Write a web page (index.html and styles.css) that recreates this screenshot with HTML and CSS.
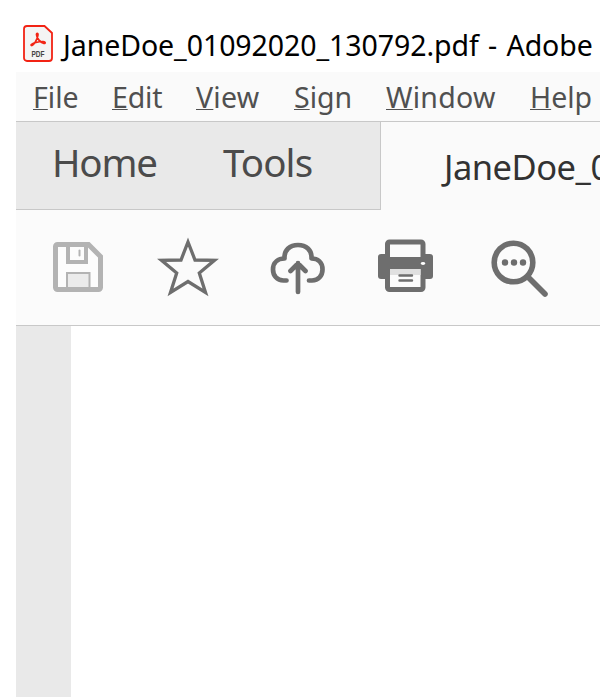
FILE: index.html
```html
<!DOCTYPE html>
<html lang="en">
<head>
<meta charset="utf-8">
<title>JaneDoe_01092020_130792.pdf - Adobe</title>
<link rel="stylesheet" href="styles.css">
</head>
<body>
<div class="window">
  <header class="titlebar">
    <svg class="pdf-icon" viewBox="0 0 30 37">
      <path class="pdf-page" d="M4 1H21.5L29 8V33a3 3 0 0 1-3 3H4a3 3 0 0 1-3-3V4a3 3 0 0 1 3-3Z"/>
      <path class="pdf-mark" d="M8.500 20.500C10.500 21 14.600 14 15 9.800C15.100 7.700 13.400 7.700 13.500 9.800C13.700 13 17.500 17.900 20.800 18.400C22.900 18.700 22.600 16.600 20.200 16.500C16 16.400 9 18.200 8.200 19.700Q7.900 20.300 8.500 20.500"/>
      <text class="pdf-label" x="15" y="32" textLength="13" lengthAdjust="spacingAndGlyphs">PDF</text>
    </svg>
    <span class="title">JaneDoe_01092020_130792.pdf - Adobe</span>
  </header>
  <nav class="menubar">
    <span class="file"><u>F</u>ile</span>
    <span class="edit"><u>E</u>dit</span>
    <span class="view"><u>V</u>iew</span>
    <span class="sign"><u>S</u>ign</span>
    <span class="win"><u>W</u>indow</span>
    <span class="help"><u>H</u>elp</span>
  </nav>
  <div class="tabs">
    <div class="fixed-tabs"><span class="home">Home</span><span class="tools">Tools</span></div>
    <div class="doc-tab"><span class="doc">JaneDoe_0</span></div>
  </div>
  <div class="toolbar">
    <svg class="save" viewBox="0 0 50 50"><path class="save-frame" d="M4.500 2.500H35.500L47.500 14.500V45.500a2 2 0 0 1-2 2H4.500a2 2 0 0 1-2-2V4.500a2 2 0 0 1 2-2Z"/><path class="save-top" d="M15 2V20H33V2"/><path class="save-slot" d="M26.500 8.500v5"/><path class="save-label" d="M14 45V31H36.500V45"/></svg>
    <svg class="star" viewBox="0 0 60 58"><path d="M30 4L37 22L56.500 22.300L41.300 35L47.500 54.500L30 43.500L12.500 54.500L18.700 35L3.500 22.300L23 22Z"/></svg>
    <svg class="cloud" viewBox="0 0 56 54"><path d="M16.500 38.500H13.500C7 38.500 3 33.500 3 27.500C3 20 8.500 16.500 14.500 16.500C14 8 20 3 28 3C36 3 42 8 41.500 16.500C47.500 16.500 52.500 20 52.500 27.500C52.500 33.500 48.500 38.500 42 38.500H39M28 50V21M20.500 29L28 21.500L35.500 29"/></svg>
    <svg class="printer" viewBox="0 0 55 53"><path class="solid" d="M3 15H52a3 3 0 0 1 3 3V37a3 3 0 0 1-3 3H3a3 3 0 0 1-3-3V18a3 3 0 0 1 3-3Z"/><rect class="paper" x="9.500" y="3" width="35.500" height="47.500" rx="2"/><path class="solid" d="M8 18H47V30H8Z"/><path class="shade" d="M12 30H42.500V36H12Z"/><path class="lines" d="M21.500 36.500H34M21.500 41.500H34"/><ellipse class="light" cx="45" cy="24.500" rx="2.200" ry="1.400"/></svg>
    <svg class="search" viewBox="0 0 58 58"><circle class="lens" cx="22.500" cy="22.500" r="19.300"/><path class="handle" d="M37 37L54 54"/><circle cx="14" cy="22.500" r="3.200"/><circle cx="23" cy="22.500" r="3.200"/><circle cx="32" cy="22.500" r="3.200"/></svg>
  </div>
  <main class="document"><aside class="sidebar"></aside></main>
</div>
</body>
</html>
```
FILE: styles.css
```css
* { box-sizing: border-box; }
body { margin: 0; background: #fff; font-family: "Noto Sans", "Open Sans", sans-serif; overflow: hidden; }
.window { width: 600px; height: 697px; display: flex; flex-direction: column; overflow: hidden; padding-left: 16px; }
svg { flex: none; overflow: visible; fill: none; }
span { white-space: nowrap; flex: none; }
.titlebar { height: 72px; display: flex; align-items: flex-start; padding: 25px 0 0 7px; flex: none; }
.pdf-icon { width: 30px; height: 37px; }
.pdf-page { fill: #f4f4f4; stroke: #f22314; stroke-width: 1.800; }
.pdf-mark { stroke: #f22314; stroke-width: 1.700; }
.pdf-label { fill: #444; font: bold 8.500px "Liberation Sans", sans-serif; text-anchor: middle; }
.title { margin-left: 10px; font-size: 28.500px; line-height: 40px; letter-spacing: -0.070px; word-spacing: 2px; color: #000; }
.menubar { height: 50px; flex: none; display: flex; gap: 34px; padding: 5px 0 0 17px; background: #fafafa; border-bottom: 1px solid #c8c8c8; color: #505050; font-size: 28.500px; line-height: 40px; }
.menubar span { display: block; }
.menubar u { text-decoration-thickness: 1px; text-underline-offset: 1px; text-decoration-skip-ink: none; }
.file { width: 45px; }
.edit { width: 50px; letter-spacing: -0.200px; }
.view { width: 64px; letter-spacing: 0.250px; }
.sign { width: 58px; }
.win { width: 110px; letter-spacing: 0.250px; }
.help { width: 62px; }
.tabs { height: 88px; flex: none; display: flex; background: #fafafa; }
.fixed-tabs { width: 365px; flex: none; display: flex; background: #e9e9e9; border-right: 1px solid #c8c8c8; border-bottom: 1px solid #c8c8c8; padding: 12px 0 0 36px; color: #4b4b4b; font-size: 38.500px; line-height: 57px; }
.home { width: 171px; letter-spacing: -1.200px; }
.tools { letter-spacing: -0.900px; }
.doc-tab { padding: 16px 0 0 63px; color: #323232; font-size: 34.500px; line-height: 57px; letter-spacing: -0.500px; overflow: hidden; }
.toolbar { height: 116px; flex: none; display: flex; align-items: flex-start; background: #fbfbfb; border-bottom: 1px solid #c8c8c8; }
.save { width: 50px; height: 50px; margin: 32px 0 0 37px; stroke: #b3b3b3; }
.save-frame { fill: #fcfcfc; stroke-width: 5; }
.save-top { stroke-width: 4; }
.save-slot { stroke-width: 2; stroke-linecap: round; }
.save-label { fill: #ebebeb; stroke-width: 2; }
.star { width: 60px; height: 58px; margin: 28px 0 0 55px; stroke: #6e6e6e; stroke-width: 3.300; }
.cloud { width: 56px; height: 54px; margin: 32px 0 0 52px; stroke: #6e6e6e; stroke-width: 4.700; stroke-linecap: round; stroke-linejoin: round; }
.printer { width: 55px; height: 53px; margin: 29px 0 0 52px; }
.solid { fill: #6e6e6e; }
.paper { fill: #fbfbfb; stroke: #6e6e6e; stroke-width: 5; }
.shade { fill: #e0e0e0; }
.lines { stroke: #6e6e6e; stroke-width: 2.400; stroke-linecap: round; }
.light { fill: #fff; }
.search { width: 58px; height: 58px; margin: 30px 0 0 58px; fill: #6e6e6e; }
.lens { fill: #fcfcfc; stroke: #6e6e6e; stroke-width: 5.600; }
.handle { stroke: #6e6e6e; stroke-width: 5.600; stroke-linecap: round; }
.document { flex: 1; display: flex; background: #fff; }
.sidebar { width: 55px; background: #e9e9e9; }
```
